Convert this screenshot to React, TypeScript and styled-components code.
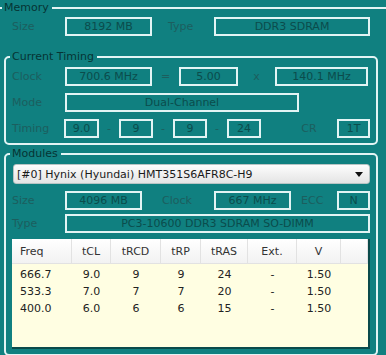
import * as React from 'react'
import styled, { createGlobalStyle } from 'styled-components'

const Global = createGlobalStyle`
    html, body {
        margin: 0;
        padding: 0;
        background: #108080;
    }
    body {
        font-family: "DejaVu Sans", Verdana, sans-serif;
        font-size: 11px;
    }
`

const Page = styled.div`
    width: 386px;
    height: 355px;
    overflow: hidden;
    background: #108080;
    padding-top: 1px;
    box-sizing: border-box;
    display: flex;
    flex-direction: column;
`

const Frame = styled.fieldset<{ $bleed?: boolean; $gap: number; $top?: number }>`
    margin: ${p => (p.$bleed ? '0 -10px 0 -10px' : `${p.$top || 0}px 8px 0 4px`)};
    padding: ${p => (p.$bleed ? '3px 0 0 20px' : '4px 6px 5px 6px')};
    border: 2px solid #e2f4f4;
    border-bottom: ${p => (p.$bleed ? 'none' : '2px solid #e2f4f4')};
    border-radius: 5px;
    min-width: 0;
    display: flex;
    flex-direction: column;
    gap: ${p => p.$gap}px;
`

const Legend = styled.legend<{ $bleed?: boolean }>`
    padding: 0 3px 0 2px;
    margin-left: ${p => (p.$bleed ? -10 : -2)}px;
    font-size: 11px;
    line-height: 13px;
    color: #063434;
`

const Row = styled.div<{ $top?: number }>`
    display: flex;
    align-items: center;
    height: 19px;
    margin-top: ${p => p.$top || 0}px;
`

const Label = styled.span<{ $w: number; $pad?: number }>`
    width: ${p => p.$w}px;
    padding-left: ${p => p.$pad || 0}px;
    box-sizing: border-box;
    color: #1c5e5e;
    white-space: nowrap;
`

const Sep = styled.span<{ $w: number; $pad?: number }>`
    width: ${p => p.$w}px;
    padding-left: ${p => p.$pad || 0}px;
    box-sizing: border-box;
    text-align: center;
    color: #1c5e5e;
`

const Field = styled.div<{ $w: number }>`
    width: ${p => p.$w}px;
    height: 19px;
    box-sizing: border-box;
    border: 2px solid #e2f4f4;
    color: #0b4c4c;
    text-align: center;
    line-height: 15px;
    white-space: nowrap;
    overflow: hidden;
`

const Select = styled.div`
    margin: 0 0 0 1px;
    height: 20px;
    box-sizing: border-box;
    border: 1px solid #b8c4c4;
    border-radius: 3px;
    background: linear-gradient(#fdfdfd, #e4e4e4);
    display: flex;
    align-items: center;
    justify-content: space-between;
    padding: 0 6px 0 3px;
    color: #1a1a1a;
    white-space: nowrap;
`

const Table = styled.div`
    margin-top: 6px;
    height: 110px;
    box-sizing: border-box;
    background: #fffee2;
    border-right: 2px solid #0a4a4a;
    border-bottom: 2px solid #0a4a4a;
    display: grid;
    grid-template-columns: 60px 39px 50px 40px 47px 49px 44px 1fr;
    grid-template-rows: 27px;
    grid-auto-rows: 17px;
    align-content: start;
    color: #222;
`

const Head = styled.div<{ $left?: boolean }>`
    height: 25px;
    box-sizing: border-box;
    background: linear-gradient(#ffffff, #f2f2f2);
    border-right: 1px solid #e2e2e2;
    border-bottom: 1px solid #e2e2e2;
    display: flex;
    align-items: center;
    justify-content: ${p => (p.$left ? 'flex-start' : 'center')};
    padding-left: ${p => (p.$left ? 8 : 0)}px;
    color: #333;
`

const Cell = styled.div<{ $left?: boolean }>`
    display: flex;
    align-items: center;
    justify-content: ${p => (p.$left ? 'flex-start' : 'center')};
    padding-left: ${p => (p.$left ? 8 : 0)}px;
`

const heads = ['Freq', 'tCL', 'tRCD', 'tRP', 'tRAS', 'Ext.', 'V', '']
const rows = [
    ['666.7', '9.0', '9', '9', '24', '-', '1.50', ''],
    ['533.3', '7.0', '7', '7', '20', '-', '1.50', ''],
    ['400.0', '6.0', '6', '6', '15', '-', '1.50', ''],
]

export default class App extends React.Component<{}, {}> {
    public render() {
        return <>
            <Global />
            <Page>
                <Frame $bleed={true} $gap={0}>
                    <Legend $bleed={true}>Memory</Legend>
                    <Row>
                        <Label $w={53}>Size</Label>
                        <Field $w={87}>8192 MB</Field>
                        <Label $w={62} $pad={16}>Type</Label>
                        <Field $w={156}>DDR3 SDRAM</Field>
                    </Row>
                </Frame>
                <Frame $gap={7} $top={14}>
                    <Legend>Current Timing</Legend>
                    <Row>
                        <Label $w={53}>Clock</Label>
                        <Field $w={87}>700.6 MHz</Field>
                        <Sep $w={27}>=</Sep>
                        <Field $w={59}>5.00</Field>
                        <Sep $w={37}>x</Sep>
                        <Field $w={93}>140.1 MHz</Field>
                    </Row>
                    <Row>
                        <Label $w={53}>Mode</Label>
                        <Field $w={234}>Dual-Channel</Field>
                    </Row>
                    <Row>
                        <Label $w={52}>Timing</Label>
                        <Field $w={35}>9.0</Field>
                        <Sep $w={20}>-</Sep>
                        <Field $w={34}>9</Field>
                        <Sep $w={20}>-</Sep>
                        <Field $w={34}>9</Field>
                        <Sep $w={20}>-</Sep>
                        <Field $w={34}>24</Field>
                        <Sep $w={76} $pad={20}>CR</Sep>
                        <Field $w={33}>1T</Field>
                    </Row>
                </Frame>
                {this.renderModules()}
            </Page>
        </>
    }
    public renderModules() {
        return <Frame $gap={0} $top={2}>
            <Legend>Modules</Legend>
            <Select>
                <span>[#0] Hynix (Hyundai) HMT351S6AFR8C-H9</span>
                <svg width="8" height="5" viewBox="0 0 8 5">
                    <polygon points="0,0 8,0 4,5" fill="#111" />
                </svg>
            </Select>
            <Row $top={7}>
                <Label $w={53}>Size</Label>
                <Field $w={77}>4096 MB</Field>
                <Label $w={72} $pad={20}>Clock</Label>
                <Field $w={77}>667 MHz</Field>
                <Label $w={46} $pad={10}>ECC</Label>
                <Field $w={33}>N</Field>
            </Row>
            <Row $top={4}>
                <Label $w={53}>Type</Label>
                <Field $w={305}>PC3-10600 DDR3 SDRAM SO-DIMM</Field>
            </Row>
            <Table>
                {heads.map((h, i) => <Head key={i} $left={i === 0}>{h}</Head>)}
                {rows.map((r, ri) => r.map((c, ci) =>
                    <Cell key={ri + '-' + ci} $left={ci === 0}>{c}</Cell>
                ))}
            </Table>
        </Frame>
    }
}
